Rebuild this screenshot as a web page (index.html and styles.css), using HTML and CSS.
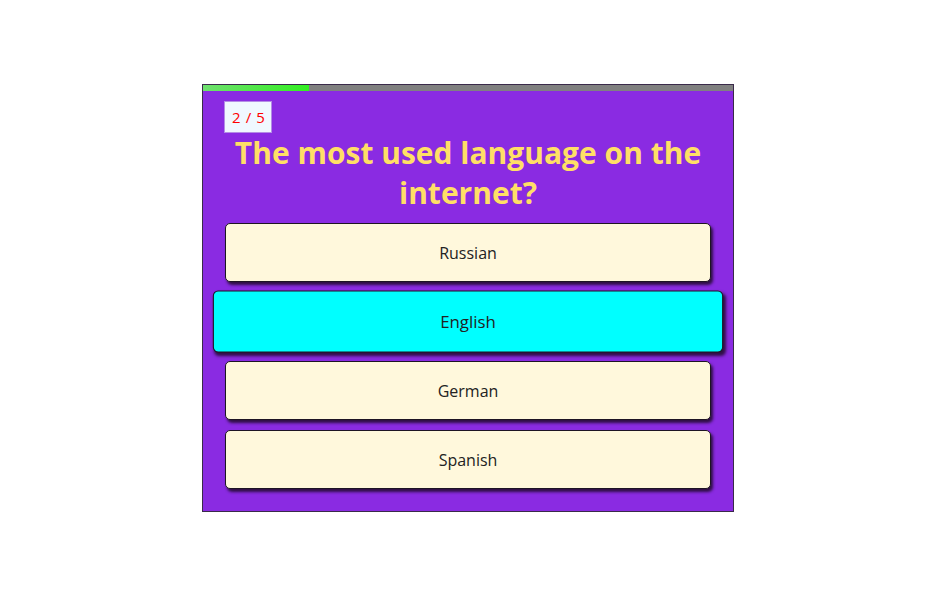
FILE: index.html
```html
<!DOCTYPE html>
<html>
<head>
<meta charset="utf-8">
<link rel="stylesheet" href="styles.css">
</head>
<body>
<div class="quiz">
  <div class="progress"><div class="progress-fill" style="width:20%"></div></div>
  <div class="content">
    <div class="counter">2 / 5</div>
    <h1 class="question">The most used language on the internet?</h1>
    <div class="answers">
      <button class="answer">Russian</button>
      <button class="answer active">English</button>
      <button class="answer">German</button>
      <button class="answer">Spanish</button>
    </div>
  </div>
</div>
</body>
</html>
```
FILE: styles.css
```css
html, body {
  margin: 0;
  padding: 0;
  background: #ffffff;
}
body {
  font-family: "Open Sans", "Noto Sans", sans-serif;
}
.quiz {
  width: 530px;
  margin: 84px 0 0 202px;
  border: 1px solid #3a2a4a;
  background: #8a2be2;
}
.progress {
  height: 6px;
  background: #808080;
}
.progress-fill {
  height: 100%;
  background: linear-gradient(to right, #6fe06f, #33ee22);
}
.content {
  padding: 10px 22px 22px 22px;
}
.counter {
  display: inline-block;
  margin-left: -1px;
  padding: 0 6px 0 7px;
  height: 30px;
  line-height: 30px;
  background: #f0f8ff;
  border: 1px solid #b48de6;
  color: #ff0000;
  font-size: 15px;
  letter-spacing: 0.6px;
  font-family: "Open Sans", sans-serif;
}
.question {
  margin: 0;
  text-align: center;
  color: #ffdf66;
  font-size: 30px;
  line-height: 40px;
  font-weight: 700;
  font-family: "Open Sans", sans-serif;
}
.answers {
  display: flex;
  flex-direction: column;
  gap: 10px;
  margin-top: 10px;
}
.answer {
  height: 59px;
  background: #fff8dc;
  border: 1px solid #1e1424;
  border-radius: 5px;
  box-shadow: 2px 3px 3px rgba(30, 10, 40, 0.85);
  font-family: "Open Sans", sans-serif;
  font-size: 16px;
  color: #222;
  cursor: pointer;
}
.answer.active {
  background: #00ffff;
  transform: scale(1.05);
}
```
